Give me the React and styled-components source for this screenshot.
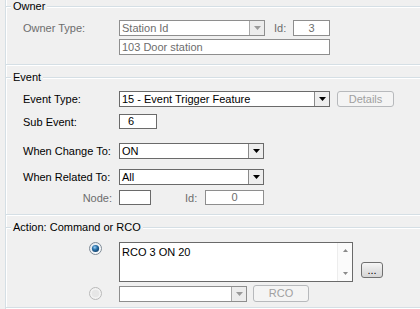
import React from 'react';
import styled, { createGlobalStyle } from 'styled-components';

const Global = createGlobalStyle`
  html, body { margin: 0; padding: 0; background: #f0f0f0; }
  body { font-family: "Liberation Sans", Arial, sans-serif; font-size: 11px; color: #000; }
  * { box-sizing: border-box; }
`;

const Page = styled.div`
  width: 420px;
  height: 309px;
  overflow: hidden;
  background: #f0f0f0;
  padding-left: 5px;
`;

const Panel = styled.div`
  width: 440px;
  height: 100%;
  border-left: 1px solid #d5dfe5;
  box-shadow: inset 1px 0 0 #fff;
  display: flex;
  flex-direction: column;
  gap: 6px;
`;

const Group = styled.fieldset`
  margin: 0;
  padding: 0;
  min-width: 0;
  border: 1px solid #d5dfe5;
  border-left: none;
  box-shadow: inset 0 1px 0 #fff, 0 1px 0 #fff;
`;

const Caption = styled.legend`
  margin-left: 5px;
  padding: 0 2px;
  line-height: 13px;
  font-size: 11px;
  background: #f0f0f0;
`;

const Body = styled.div`
  padding: ${p => p.$pad};
  display: flex;
  flex-direction: column;
`;

const Row = styled.div`
  display: flex;
  align-items: ${p => p.$align || 'center'};
  height: ${p => p.$h}px;
  margin-top: ${p => p.$mt || 0}px;
`;

const Label = styled.div`
  width: ${p => p.$w || 96}px;
  flex: none;
  margin-left: ${p => p.$ml || 0}px;
  color: ${p => (p.$disabled ? '#6d6d6d' : '#000')};
  text-align: ${p => (p.$right ? 'right' : 'left')};
  padding-right: ${p => (p.$right ? 7 : 0)}px;
  white-space: nowrap;
`;

const Field = styled.div`
  flex: none;
  width: ${p => p.$w}px;
  height: ${p => p.$h || 16}px;
  border: 1px solid ${p => (p.$disabled ? '#8e8e8e' : '#6a6a6a')};
  background: #fff;
  color: ${p => (p.$disabled ? '#6d6d6d' : '#000')};
  line-height: ${p => (p.$h || 16) - 2}px;
  padding: 0 ${p => p.$pr || 2}px 0 ${p => p.$pl || 2}px;
  text-align: ${p => p.$align || 'left'};
  white-space: nowrap;
  overflow: hidden;
`;

const ComboBox = styled.div`
  flex: none;
  width: ${p => p.$w}px;
  height: 16px;
  border: 1px solid ${p => (p.$disabled ? '#8e8e8e' : '#6a6a6a')};
  background: #fff;
  display: flex;
`;

const ComboText = styled.div`
  flex: 1;
  line-height: 14px;
  padding-left: 2px;
  color: ${p => (p.$disabled ? '#6d6d6d' : '#000')};
  white-space: nowrap;
  overflow: hidden;
`;

const DropButton = styled.div`
  width: 15px;
  flex: none;
  border-left: 1px solid ${p => (p.$disabled ? '#a8a8a8' : '#8a8a8a')};
  background: ${p => (p.$disabled ? '#ececec' : '#eeeeee')};
  display: flex;
  align-items: center;
  justify-content: center;
`;

const PushButton = styled.div`
  flex: none;
  width: ${p => p.$w}px;
  height: ${p => p.$h || 16}px;
  margin-left: ${p => p.$ml || 0}px;
  border: 1px solid ${p => (p.$disabled ? '#b7b9bc' : '#707070')};
  border-radius: 3px;
  background: ${p => (p.$disabled ? '#f4f4f4' : 'linear-gradient(#f6f6f6, #e4e4e4 50%, #d6d6d6)')};
  color: ${p => (p.$disabled ? '#a0a0a0' : '#000')};
  display: flex;
  align-items: center;
  justify-content: center;
  line-height: 1;
  align-self: ${p => p.$self || 'auto'};
  margin-bottom: ${p => p.$mb || 0}px;
`;

const Spacer = styled.div`
  flex: none;
  width: ${p => p.$w}px;
`;

const RadioSlot = styled.div`
  flex: none;
  width: 13px;
  height: 13px;
  margin-left: 66px;
  margin-right: 17px;
  align-self: ${p => p.$self || 'center'};
  margin-top: ${p => p.$mt || 0}px;
  display: flex;
`;

const Memo = styled.div`
  flex: none;
  width: 234px;
  height: 40px;
  border: 1px solid #6a6a6a;
  background: #fff;
  display: flex;
`;

const MemoText = styled.div`
  flex: 1;
  padding: 2px 2px;
  line-height: 14px;
`;

const ScrollCol = styled.div`
  width: 15px;
  flex: none;
  background: #fbfbfb;
  border-left: 1px solid #ededed;
  display: flex;
  flex-direction: column;
  justify-content: space-between;
  align-items: center;
  padding: 6px 0;
`;

const Arrow = ({ color = '#000', up = false, w = 7, h = 4 }) => (
  <svg width={w} height={h} viewBox={`0 0 ${w} ${h}`}>
    <polygon
      points={up ? `0,${h} ${w},${h} ${w / 2},0` : `0,0 ${w},0 ${w / 2},${h}`}
      fill={color}
    />
  </svg>
);

const Radio = ({ checked }) => (
  <svg width="13" height="13" viewBox="0 0 13 13">
    <defs>
      <linearGradient id="rg-bg" x1="0" y1="0" x2="1" y2="1">
        <stop offset="0" stopColor="#dfe6ee" />
        <stop offset="1" stopColor="#ffffff" />
      </linearGradient>
      <radialGradient id="rg-dot" cx="0.4" cy="0.35" r="0.7">
        <stop offset="0" stopColor="#9fd0f5" />
        <stop offset="0.45" stopColor="#2b74ad" />
        <stop offset="1" stopColor="#0f3c66" />
      </radialGradient>
    </defs>
    {checked ? (
      <>
        <circle cx="6.5" cy="6.5" r="6" fill="url(#rg-bg)" stroke="#7f8b96" />
        <circle cx="6.5" cy="6.5" r="3.6" fill="url(#rg-dot)" />
      </>
    ) : (
      <>
        <circle cx="6.5" cy="6.5" r="6" fill="#f2f2f2" stroke="#b8b8b8" />
        <circle cx="6.5" cy="6.5" r="3.8" fill="#e6e6e6" />
      </>
    )}
  </svg>
);

const Combo = ({ w, text, disabled }) => (
  <ComboBox $w={w} $disabled={disabled}>
    <ComboText $disabled={disabled}>{text}</ComboText>
    <DropButton $disabled={disabled}>
      <Arrow color={disabled ? '#9a9a9a' : '#000'} />
    </DropButton>
  </ComboBox>
);

export default function App() {
  return (
    <>
      <Global />
      <Page>
        <Panel>
          <Group>
            <Caption>Owner</Caption>
            <Body $pad="7px 0 9px 17px">
              <Row $h={16}>
                <Label $disabled>Owner Type:</Label>
                <Combo w={146} text="Station Id" disabled />
                <Label $w={19} $ml={9} $disabled>Id:</Label>
                <Field $w={37} $disabled $align="center">3</Field>
              </Row>
              <Row $h={16} $mt={3}>
                <Spacer $w={96} />
                <Field $w={211} $disabled>103 Door station</Field>
              </Row>
            </Body>
          </Group>

          <Group>
            <Caption>Event</Caption>
            <Body $pad="7px 0 9px 17px">
              <Row $h={16}>
                <Label>Event Type:</Label>
                <Combo w={211} text="15 - Event Trigger Feature" />
                <PushButton $w={57} $ml={7} $disabled>Details</PushButton>
              </Row>
              <Row $h={15} $mt={7}>
                <Label>Sub Event:</Label>
                <Field $w={38} $h={15} $pl={8}>6</Field>
              </Row>
              <Row $h={16} $mt={14}>
                <Label>When Change To:</Label>
                <Combo w={145} text="ON" />
              </Row>
              <Row $h={16} $mt={10}>
                <Label>When Related To:</Label>
                <Combo w={145} text="All" />
              </Row>
              <Row $h={15} $mt={5}>
                <Label $right $disabled>Node:</Label>
                <Field $w={32} $h={15} />
                <Label $w={20} $ml={34} $disabled>Id:</Label>
                <Field $w={59} $h={15} $disabled $align="center">0</Field>
              </Row>
            </Body>
          </Group>

          <Group>
            <Caption>Action: Command or RCO</Caption>
            <Body $pad="8px 0 5px 17px">
              <Row $h={40} $align="stretch">
                <RadioSlot $self="flex-start" $mt={0}>
                  <Radio checked />
                </RadioSlot>
                <Memo>
                  <MemoText>RCO 3 ON 20</MemoText>
                  <ScrollCol>
                    <Arrow up color="#8a8a8a" w={5} h={3} />
                    <Arrow color="#8a8a8a" w={5} h={3} />
                  </ScrollCol>
                </Memo>
                <PushButton $w={22} $h={16} $ml={8} $self="flex-end" $mb={4}>...</PushButton>
              </Row>
              <Row $h={17} $mt={3}>
                <RadioSlot>
                  <Radio />
                </RadioSlot>
                <Combo w={128} text="" disabled />
                <PushButton $w={56} $h={17} $ml={6} $disabled>RCO</PushButton>
              </Row>
            </Body>
          </Group>
        </Panel>
      </Page>
    </>
  );
}
